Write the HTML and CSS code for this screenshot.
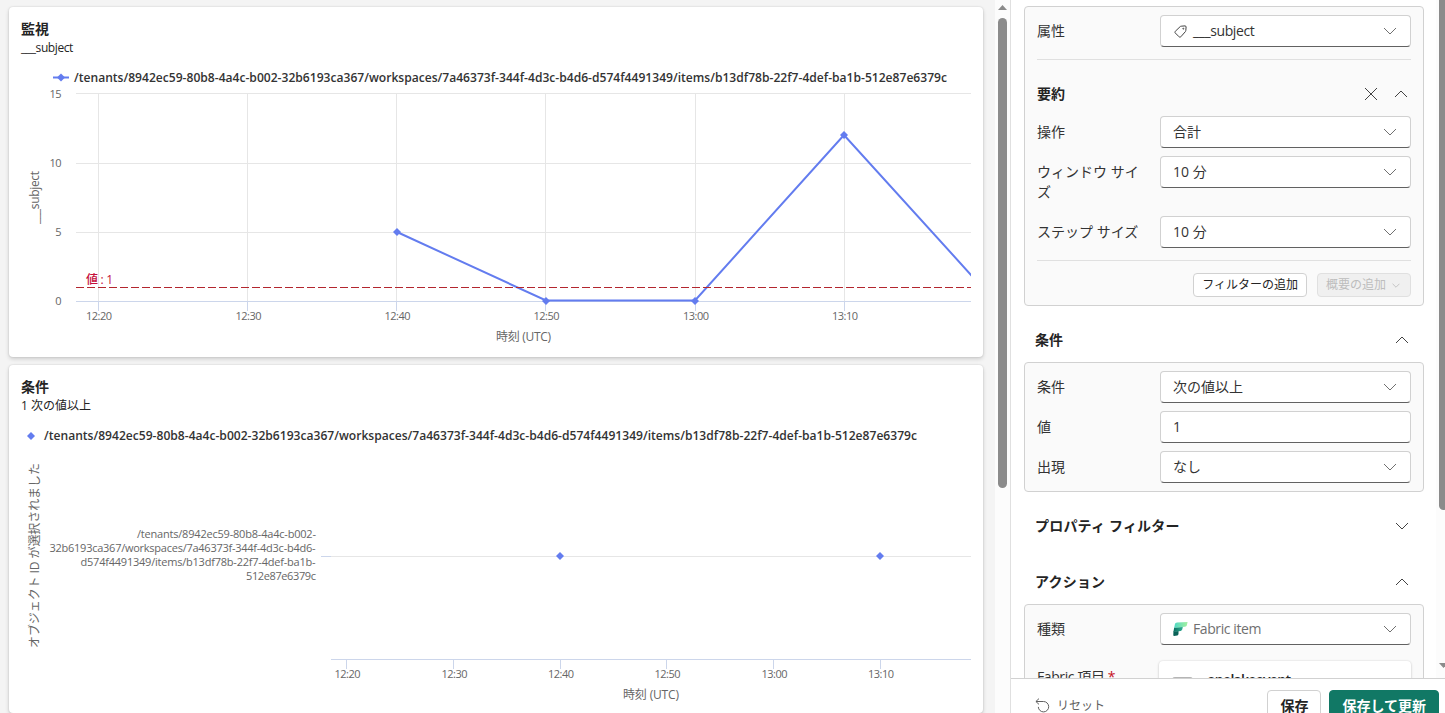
FILE: index.html
```html
<!DOCTYPE html>
<html lang="ja">
<head>
    <meta charset="UTF-8">
    <meta name="viewport" content="width=device-width, initial-scale=1.0">
    <title>監視</title>
    <link rel="stylesheet" href="styles.css">
</head>
<body>
    <svg class="defs" width="0" height="0">
        <symbol id="down" viewBox="0 0 14 8"><path d="M1 1l6 6 6-6"/></symbol>
        <symbol id="up" viewBox="0 0 14 8"><path d="M1 7l6-6 6 6"/></symbol>
    </svg>

    <main class="charts">
        <section class="card">
            <h2>監視</h2>
            <p class="subtitle latin">___subject</p>
            <svg class="chart" viewBox="21 60 950 290" width="950" height="290">
                <path class="series" d="M53 77.5h16"/>
                <path class="marker" d="M61 73.5l4 4-4 4-4-4z"/>
                <text class="legend" x="74" y="82" textLength="873" lengthAdjust="spacingAndGlyphs">/tenants/8942ec59-80b8-4a4c-b002-32b6193ca367/workspaces/7a46373f-344f-4d3c-b4d6-d574f4491349/items/b13df78b-22f7-4def-ba1b-512e87e6379c</text>

                <path class="grid" d="M76 93.5h895M76 163.5h895M76 232.5h895M98.5 93v208M247.5 93v208M396.5 93v208M545.5 93v208M695.5 93v208M844.5 93v208"/>
                <path class="axis" d="M76 301.5h895M98.5 301v10M247.5 301v10M396.5 301v10M545.5 301v10M695.5 301v10M844.5 301v10"/>
                <path class="series" d="M397 232L546 300.5H695L844 135 972 276"/>
                <path class="marker" d="M397 228l4 4-4 4-4-4zM546 297l4 4-4 4-4-4zM695 297l4 4-4 4-4-4zM844 131l4 4-4 4-4-4z"/>
                <path class="threshold" d="M76 287.5h895"/>
                <text class="threshold-label" x="86" y="284" textLength="27">値 : 1</text>

                <g class="tick end">
                    <text x="61" y="98">15</text>
                    <text x="61" y="167">10</text>
                    <text x="61" y="236">5</text>
                    <text x="61" y="305">0</text>
                </g>
                <g class="tick">
                    <text x="86" y="320" textLength="26">12:20</text>
                    <text x="235.5" y="320" textLength="26">12:30</text>
                    <text x="384.5" y="320" textLength="26">12:40</text>
                    <text x="533.5" y="320" textLength="26">12:50</text>
                    <text x="683" y="320" textLength="26">13:00</text>
                    <text x="832" y="320" textLength="26">13:10</text>
                </g>
                <text class="axis-title" x="496" y="341" textLength="55">時刻 (UTC)</text>
                <text class="axis-title" transform="translate(39 224) rotate(-90)" textLength="53">___subject</text>
            </svg>
        </section>

        <section class="card">
            <h2>条件</h2>
            <p class="subtitle">1 次の値以上</p>
            <svg class="chart" viewBox="21 418 950 290" width="950" height="290">
                <path class="marker" d="M31 432l4 4-4 4-4-4z"/>
                <text class="legend" x="44" y="440" textLength="873" lengthAdjust="spacingAndGlyphs">/tenants/8942ec59-80b8-4a4c-b002-32b6193ca367/workspaces/7a46373f-344f-4d3c-b4d6-d574f4491349/items/b13df78b-22f7-4def-ba1b-512e87e6379c</text>

                <path class="grid" d="M331 556.5h640"/>
                <path class="axis" d="M321 556.5h10M331 659.5h640M346.5 659v10M453.5 659v10M560.5 659v10M666.5 659v10M773.5 659v10M880.5 659v10"/>
                <path class="marker" d="M560 552l4 4-4 4-4-4zM880 552l4 4-4 4-4-4z"/>

                <g class="tick">
                    <text x="137" y="538" textLength="179">/tenants/8942ec59-80b8-4a4c-b002-</text>
                    <text x="49.500" y="552" textLength="266">32b6193ca367/workspaces/7a46373f-344f-4d3c-b4d6-</text>
                    <text x="80.500" y="566" textLength="235">d574f4491349/items/b13df78b-22f7-4def-ba1b-</text>
                    <text x="246" y="580" textLength="70">512e87e6379c</text>
                    <text x="334.5" y="678" textLength="26">12:20</text>
                    <text x="441.5" y="678" textLength="26">12:30</text>
                    <text x="548" y="678" textLength="26">12:40</text>
                    <text x="654.5" y="678" textLength="26">12:50</text>
                    <text x="761.5" y="678" textLength="26">13:00</text>
                    <text x="868" y="678" textLength="26">13:10</text>
                </g>
                <text class="axis-title" x="623" y="699" textLength="56">時刻 (UTC)</text>
                <text class="axis-title" transform="translate(39 648) rotate(-90)" textLength="185">オブジェクト ID が選択されました</text>
            </svg>
        </section>
    </main>

    <div class="scrollbar">
        <svg width="9" height="5" viewBox="0 0 9 5"><path d="M0 5L4.5 0 9 5z"/></svg>
        <div class="thumb"></div>
    </div>

    <aside class="panel">
        <div class="panel-body">
            <div class="form">
                <div class="box">
                    <div class="row">
                        <label>属性</label>
                        <div class="select">
                            <svg class="tag" width="13" height="13" viewBox="0 0 13 13"><path d="M7.2 1.2L11 .9c.7 0 1.100.4 1.100 1.100l-.3 3.600c0 .4-.2.7-.4 1L6.800 11.800c-.5.5-1.200.5-1.700 0L1.300 8c-.5-.5-.5-1.200 0-1.700L6.200 1.600c.3-.2.6-.4 1-.4z"/><circle cx="9.300" cy="3.700" r=".5"/></svg>
                            <span class="value latin">___subject</span>
                            <svg class="chevron"><use href="#down"/></svg>
                        </div>
                    </div>
                    <hr>
                    <div class="group-title">
                        <h3>要約</h3>
                        <svg class="close" width="14" height="14" viewBox="0 0 14 14"><path d="M1 1l12 12M13 1L1 13"/></svg>
                        <svg class="chevron dark"><use href="#up"/></svg>
                    </div>
                    <div class="row">
                        <label>操作</label>
                        <div class="select"><span class="value">合計</span><svg class="chevron"><use href="#down"/></svg></div>
                    </div>
                    <div class="row tall">
                        <label>ウィンドウ サイズ</label>
                        <div class="select"><span class="value">10 分</span><svg class="chevron"><use href="#down"/></svg></div>
                    </div>
                    <div class="row">
                        <label>ステップ サイズ</label>
                        <div class="select"><span class="value">10 分</span><svg class="chevron"><use href="#down"/></svg></div>
                    </div>
                    <hr>
                    <div class="buttons">
                        <button class="small-btn">フィルターの追加</button>
                        <button class="small-btn" disabled>概要の追加<svg class="chevron mini"><use href="#down"/></svg></button>
                    </div>
                </div>

                <div class="section-title"><h3>条件</h3><svg class="chevron dark"><use href="#up"/></svg></div>
                <div class="box">
                    <div class="row">
                        <label>条件</label>
                        <div class="select"><span class="value">次の値以上</span><svg class="chevron"><use href="#down"/></svg></div>
                    </div>
                    <div class="row">
                        <label>値</label>
                        <div class="select"><span class="value">1</span></div>
                    </div>
                    <div class="row">
                        <label>出現</label>
                        <div class="select"><span class="value">なし</span><svg class="chevron"><use href="#down"/></svg></div>
                    </div>
                </div>

                <div class="section-title kana"><h3>プロパティ フィルター</h3><svg class="chevron dark"><use href="#down"/></svg></div>
                <div class="section-title kana"><h3>アクション</h3><svg class="chevron dark"><use href="#up"/></svg></div>
                <div class="box">
                    <div class="row">
                        <label>種類</label>
                        <div class="select">
                            <svg class="fabric" width="15" height="14" viewBox="0 0 15 14">
                                <defs>
                                    <linearGradient id="mint"><stop offset="0" stop-color="#4fd8c4"/><stop offset="1" stop-color="#a4f0a0"/></linearGradient>
                                    <linearGradient id="teal"><stop offset="0" stop-color="#0b6b5e"/><stop offset="1" stop-color="#2fae93"/></linearGradient>
                                </defs>
                                <path fill="#0a6258" d="M.4 9.500L5.500 9v2.800c0 .8-.4 1.500-1.200 1.700L1 14c-.5 0-.8-.4-.7-.9z"/>
                                <path fill="url(#teal)" d="M1.200 5.500L9.800 5l-.5 2.200c-.2.900-.8 1.500-1.700 1.700L.4 10z"/>
                                <path fill="url(#mint)" d="M1.900 2.200C2.200 1 3 .5 4 .4L14.600 0l-.7 3c-.2.9-.9 1.700-2 1.800l-10.700.9z"/>
                            </svg>
                            <span class="value placeholder">Fabric item</span>
                            <svg class="chevron"><use href="#down"/></svg>
                        </div>
                    </div>
                    <div class="row item-row">
                        <label>Fabric 項目 <span class="required">*</span></label>
                        <div class="item-card"><span class="item-icon"></span><b>onelakeevent</b></div>
                    </div>
                </div>
            </div>
            <div class="panel-scroll">
                <div class="panel-thumb"></div>
                <svg width="9" height="5" viewBox="0 0 9 5"><path d="M0 0h9L4.500 5z"/></svg>
            </div>
        </div>
        <footer class="footer">
            <div class="reset">
                <svg width="15" height="15" viewBox="0 0 15 15"><path d="M4 .6L.9 3.500 4 6.400M1 3.500h7.500a5.200 5.200 0 1 1-5.200 5.400"/></svg>
                リセット
            </div>
            <button class="btn">保存</button>
            <button class="btn primary">保存して更新</button>
        </footer>
    </aside>
</body>
</html>
```
FILE: styles.css
```css
* {
    box-sizing: border-box;
}
body {
    margin: 0;
    height: 100vh;
    display: flex;
    overflow: hidden;
    background: #f4f4f4;
    color: #242424;
    font-family: "Open Sans", "Noto Sans CJK JP", sans-serif;
    font-size: 14px;
    line-height: 20px;
}
h2, h3, p {
    margin: 0;
    font-size: 14px;
}
svg {
    display: block;
    flex-shrink: 0;
}
.defs {
    position: absolute;
}

/* charts */
.charts {
    width: 995px;
    padding: 7px 12px 0 9px;
    display: flex;
    flex-direction: column;
    gap: 8px;
}
.card {
    height: 350px;
    flex-shrink: 0;
    padding: 12px 12px 0;
    background: #fff;
    border-radius: 4px;
    box-shadow: 0 0 2px rgba(0, 0, 0, 0.14), 0 2px 4px rgba(0, 0, 0, 0.16);
}
.card + .card {
    height: 348px;
}
.card h2 {
    line-height: 20px;
}
.subtitle {
    font-size: 12px;
    line-height: 17px;
}
.chart {
    margin-top: 4px;
}
.chart text {
    font-size: 12px;
    fill: #666;
}
.chart .tick text {
    font-size: 11px;
}
.end {
    text-anchor: end;
    letter-spacing: -0.5px;
}
.chart .legend {
    font-weight: 600;
    fill: #333;
}
.chart .threshold-label {
    fill: #c50f3c;
    font-weight: 500;
}
.grid, .axis, .series, .threshold {
    fill: none;
    stroke: #e6e6e6;
}
.axis {
    stroke: #ccd6eb;
}
.series {
    stroke: #637cef;
    stroke-width: 2;
}
.marker {
    fill: #637cef;
}
.threshold {
    stroke: #b3262e;
    stroke-dasharray: 8 3;
}

/* scrollbars */
.scrollbar {
    width: 15px;
    padding: 5px 3px;
    display: flex;
    flex-direction: column;
    align-items: center;
    gap: 8px;
    background: #fcfcfc;
}
.scrollbar svg, .panel-scroll svg {
    fill: #8b8b8b;
}
.thumb {
    width: 9px;
    height: 470px;
    border-radius: 5px;
    background: #8b8b8b;
}

/* settings panel */
.panel {
    flex: 1;
    display: flex;
    flex-direction: column;
    border-left: 1px solid #e0e0e0;
    background: #fff;
}
.panel-body {
    height: 678px;
    display: flex;
    overflow: hidden;
}
.form {
    width: 425px;
    padding: 6px 12px 0 13px;
}
.box {
    padding: 8px 12px;
    border: 1px solid #d1d1d1;
    border-radius: 4px;
    background: #fafafa;
}
.row {
    display: flex;
    justify-content: space-between;
    min-height: 32px;
}
.row + .row {
    margin-top: 8px;
}
.row.tall {
    min-height: 52px;
}
.row label {
    width: 112px;
    padding-top: 6px;
    word-break: break-all;
    color: #333;
}
.select {
    width: 251px;
    height: 32px;
    padding: 0 13px 0 12px;
    display: flex;
    align-items: center;
    border: 1px solid #d1d1d1;
    border-bottom-color: #616161;
    border-radius: 4px;
    background: #fff;
    color: #333;
}
.value {
    flex: 1;
}
.latin {
    letter-spacing: -0.4px;
}
.tag {
    margin: 0 6px 0 1px;
    fill: none;
    stroke: #424242;
}
.fabric {
    margin-right: 5px;
}
.placeholder {
    color: #707070;
    letter-spacing: -0.4px;
}
.chevron {
    width: 14px;
    height: 8px;
    fill: none;
    stroke: #707070;
}
.dark, .close {
    stroke: #424242;
}
hr {
    margin: 12px 0;
    border: 0;
    border-top: 1px solid #e0e0e0;
}
.group-title {
    display: flex;
    align-items: center;
    height: 44px;
    padding-right: 3px;
}
.group-title h3, .section-title h3 {
    flex: 1;
    font-weight: 600;
}
.close {
    margin-right: 16px;
}
.buttons {
    display: flex;
    justify-content: flex-end;
    gap: 10px;
}
.small-btn {
    height: 24px;
    padding: 0 8px;
    display: flex;
    align-items: center;
    gap: 6px;
    border: 1px solid #d1d1d1;
    border-radius: 4px;
    background: #fff;
    color: #242424;
    font: inherit;
    font-size: 12px;
}
.small-btn:disabled {
    background: #f0f0f0;
    border-color: #e0e0e0;
    color: #bdbdbd;
}
.mini {
    width: 8px;
    height: 5px;
    margin-right: 2px;
    stroke: #bdbdbd;
    stroke-width: 1.5;
}
.section-title {
    height: 56px;
    padding: 11px 15px 0 11px;
    display: flex;
    align-items: center;
}
.kana {
    padding-top: 12px;
    letter-spacing: 0.2px;
}
.item-row.item-row {
    margin-top: 16px;
}
.item-row label {
    letter-spacing: -0.4px;
}
.required {
    color: #c50f1f;
}
.item-card {
    width: 252px;
    height: 60px;
    padding: 9px 13px;
    display: flex;
    gap: 14px;
    border-radius: 4px;
    background: #fff;
    box-shadow: 0 0 2px rgba(0, 0, 0, 0.12), 0 1px 3px rgba(0, 0, 0, 0.14);
}
.item-card b {
    font-weight: 600;
    letter-spacing: -0.7px;
}
.item-icon {
    width: 21px;
    height: 20px;
    margin-top: 7px;
    border-radius: 3px;
    background: #b5b5b5;
}
.panel-scroll {
    width: 9px;
    padding-left: 3px;
    overflow: hidden;
    background: #fcfcfc;
}
.panel-thumb {
    width: 9px;
    height: 510px;
    margin-bottom: 153px;
    border-radius: 0 0 5px 5px;
    background: #8b8b8b;
}
.footer {
    height: 35px;
    padding: 11px 6px 0 24px;
    display: flex;
    gap: 8px;
    border-top: 1px solid #d1d1d1;
    overflow: hidden;
}
.reset {
    flex: 1;
    display: flex;
    gap: 7px;
    padding-top: 6px;
    color: #616161;
    font-size: 12px;
}
.reset svg {
    margin-top: 2px;
    fill: none;
    stroke: #616161;
}
.btn {
    height: 31px;
    padding: 0 12px;
    border: 1px solid #d1d1d1;
    border-radius: 4px;
    background: #fff;
    color: #242424;
    font: inherit;
    font-weight: 600;
}
.primary {
    border-color: #117865;
    background: #117865;
    color: #fff;
}
```
